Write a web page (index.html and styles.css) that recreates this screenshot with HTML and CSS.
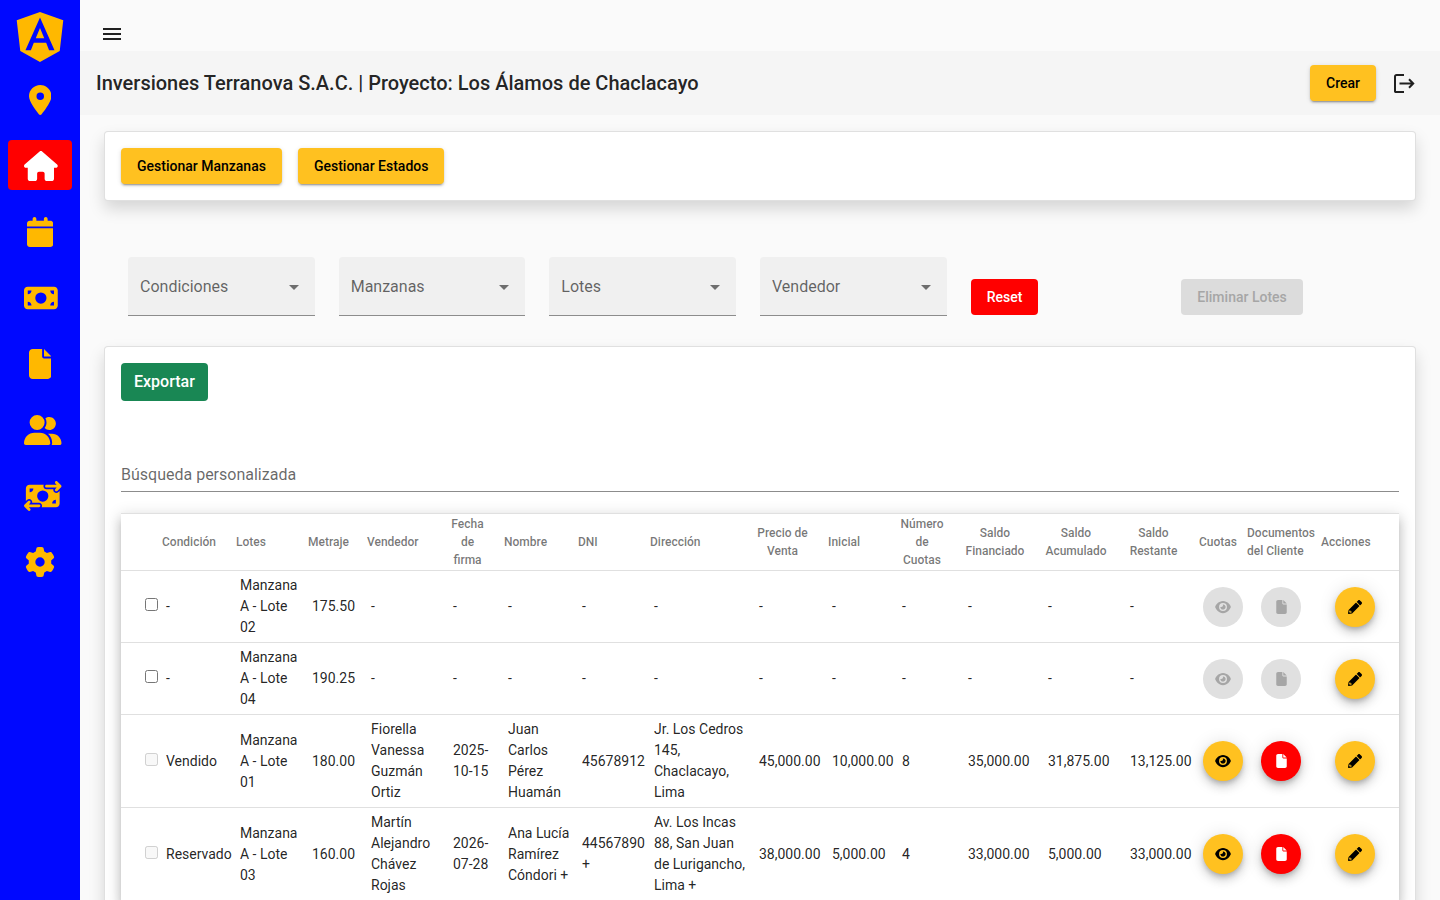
FILE: index.html
```
<!DOCTYPE html>
<html lang="es">
<head>
    <meta charset="UTF-8">
    <meta name="viewport" content="width=device-width, initial-scale=1.0">
    <title>Inversiones Terranova S.A.C.</title>
    <link rel="stylesheet" href="styles.css">
</head>
<body>
    <!-- iconos compartidos -->
    <svg class="sprite" aria-hidden="true">
        <symbol id="file" viewBox="0 0 384 512"><path d="M0 64C0 28.7 28.7 0 64 0H224V128c0 17.7 14.3 32 32 32H384V448c0 35.3-28.7 64-64 64H64c-35.3 0-64-28.7-64-64V64zm384 64H256V0L384 128z"/></symbol>
        <symbol id="eye" viewBox="0 0 576 512"><path d="M288 32c-80.8 0-145.5 36.8-192.6 80.6C48.6 156 17.3 208 2.5 243.7c-3.3 7.9-3.3 16.7 0 24.6C17.3 304 48.6 356 95.4 399.4C142.5 443.2 207.2 480 288 480s145.5-36.8 192.6-80.6c46.8-43.5 78.1-95.4 93-131.1c3.3-7.9 3.3-16.7 0-24.6c-14.9-35.7-46.2-87.7-93-131.1C433.5 68.8 368.8 32 288 32zM144 256a144 144 0 1 1 288 0 144 144 0 1 1 -288 0zm144-64c0 35.3-28.7 64-64 64c-7.1 0-13.9-1.2-20.3-3.3c-5.5-1.8-11.9 1.6-11.7 7.4c.3 6.9 1.3 13.8 3.2 20.7c13.7 51.2 66.4 81.6 117.6 67.9s81.6-66.4 67.9-117.6c-11.1-41.5-47.8-69.4-88.6-71.1c-5.8-.2-9.2 6.1-7.4 11.7c2.1 6.4 3.3 13.2 3.3 20.3z"/></symbol>
        <symbol id="pencil" viewBox="0 0 512 512"><path fill-rule="evenodd" d="M497.900 142.100l-46.100 46.100c-4.700 4.700-12.300 4.700-17 0l-111-111c-4.700-4.700-4.700-12.300 0-17l46.100-46.100c18.700-18.700 49.100-18.700 67.900 0l60.100 60.100c18.800 18.700 18.800 49.100 0 67.900zM284.200 99.800L21.600 362.400.4 483.900c-2.900 16.400 11.400 30.600 27.800 27.800l121.500-21.300 262.600-262.600c4.700-4.700 4.700-12.300 0-17l-111-111c-4.800-4.700-12.400-4.700-17.100 0zM88 424h44v34l-60 12-30-30L54 380H88v44z"/></symbol>
    </svg>

    <div class="app">
        <nav class="sidebar">
            <a class="logo" href="#inicio" aria-label="Inicio">
                <svg viewBox="31 30 188 200" width="48" height="50"><path fill-rule="evenodd" d="M125 30 31.900 63.200l14.200 123.100L125 230l78.900-43.700 14.200-123.100zM125 52.100l58 130.500h-21.700l-11.700-29.200h-49.400l-11.700 29.200H66.800zM142 135.400l-17-40.900-17 40.900z"/></svg>
            </a>
            <a class="item" href="#proyectos" aria-label="Proyectos">
                <svg viewBox="0 0 384 512"><path d="M215.700 499.200C267 435 384 279.400 384 192C384 86 298 0 192 0S0 86 0 192c0 87.400 117 243 168.300 307.200c12.300 15.300 35.100 15.300 47.400 0zM192 128a64 64 0 1 1 0 128 64 64 0 1 1 0-128z"/></svg>
            </a>
            <a class="item active" href="#lotes" aria-label="Lotes">
                <svg viewBox="0 0 576 512"><path d="M575.800 255.500c0 18-15 32.100-32 32.100h-32l.7 160.200c0 2.700-.2 5.400-.5 8.100V472c0 22.100-17.900 40-40 40H456c-1.100 0-2.200 0-3.300-.1c-1.400 .1-2.800 .1-4.200 .1H416 392c-22.100 0-40-17.900-40-40V448 384c0-17.700-14.300-32-32-32H256c-17.700 0-32 14.300-32 32v64 24c0 22.100-17.900 40-40 40H160 128.100c-1.500 0-3-.1-4.500-.2c-1.200 .1-2.400 .2-3.600 .2H104c-22.100 0-40-17.900-40-40V360c0-.9 0-1.900 .1-2.800V287.600H32c-18 0-32-14-32-32.100c0-9 3-17 10-24L266.400 8c7-7 15-8 22-8s15 2 21 7L564.800 231.500c8 7 12 15 11 24z"/></svg>
            </a>
            <a class="item" href="#calendario" aria-label="Calendario">
                <svg viewBox="0 0 448 512"><path d="M96 32V64H48C21.500 64 0 85.500 0 112v48H448V112c0-26.500-21.500-48-48-48H352V32c0-17.700-14.300-32-32-32s-32 14.300-32 32V64H160V32c0-17.700-14.300-32-32-32S96 14.300 96 32zM448 192H0V464c0 26.500 21.500 48 48 48H400c26.500 0 48-21.500 48-48V192z"/></svg>
            </a>
            <a class="item" href="#pagos" aria-label="Pagos">
                <svg viewBox="0 0 576 512"><path d="M64 64C28.700 64 0 92.700 0 128V384c0 35.300 28.700 64 64 64H512c35.300 0 64-28.700 64-64V128c0-35.300-28.700-64-64-64H64zm64 320H64V320c35.300 0 64 28.700 64 64zM64 192V128h64c0 35.300-28.700 64-64 64zM448 384c0-35.300 28.700-64 64-64v64H448zm64-192c-35.300 0-64-28.700-64-64h64v64zM288 160a96 96 0 1 1 0 192 96 96 0 1 1 0-192z"/></svg>
            </a>
            <a class="item" href="#documentos" aria-label="Documentos">
                <svg viewBox="0 0 384 512"><use href="#file"/></svg>
            </a>
            <a class="item" href="#clientes" aria-label="Clientes">
                <svg viewBox="0 0 640 512"><path d="M96 128a128 128 0 1 1 256 0A128 128 0 1 1 96 128zM0 482.300C0 383.800 79.800 304 178.300 304h91.400C368.200 304 448 383.800 448 482.300c0 16.400-13.300 29.700-29.700 29.700H29.700C13.300 512 0 498.700 0 482.300zM609.300 512H471.400c5.400-9.400 8.600-20.300 8.600-32v-8c0-60.700-27.100-115.200-69.800-151.800c2.400-.1 4.700-.2 7.100-.2h61.400C567.800 320 640 392.200 640 481.300c0 17-13.800 30.700-30.700 30.700zM432 256c-31 0-59-12.600-79.300-32.900C372.400 196.500 384 163.600 384 128c0-26.800-6.600-52.100-18.300-74.300C384.300 40.100 407.200 32 432 32c61.900 0 112 50.100 112 112s-50.100 112-112 112z"/></svg>
            </a>
            <a class="item" href="#transferencias" aria-label="Transferencias">
                <svg viewBox="0 0 640 512"><path d="M535 41c-9.400-9.400-9.400-24.600 0-33.900s24.600-9.400 33.900 0l64 64c4.500 4.500 7 10.600 7 17s-2.500 12.500-7 17l-64 64c-9.400 9.400-24.600 9.400-33.900 0s-9.400-24.600 0-33.900l23-23L384 112c-13.300 0-24-10.700-24-24s10.700-24 24-24l174.100 0L535 41zM105 377l-23 23L256 400c13.300 0 24 10.700 24 24s-10.700 24-24 24L81.900 448l23 23c9.400 9.400 9.400 24.600 0 33.900s-24.600 9.400-33.900 0L7 441c-4.500-4.500-7-10.600-7-17s2.500-12.500 7-17l64-64c9.400-9.400 24.600-9.400 33.900 0s9.400 24.600 0 33.900zM96 64H337.900c-3.700 7.200-5.900 15.300-5.900 24c0 28.700 23.300 52 52 52l117.400 0c-4 17 .6 35.500 13.800 48.800c20.300 20.300 53.200 20.300 73.500 0L608 169.500V384c0 35.300-28.700 64-64 64H302.100c3.700-7.200 5.900-15.300 5.900-24c0-28.700-23.300-52-52-52l-117.400 0c4-17-.6-35.500-13.800-48.800c-20.300-20.300-53.200-20.300-73.500 0L32 342.500V128c0-35.300 28.700-64 64-64zm64 64H96v64c35.300 0 64-28.700 64-64zM544 320c-35.300 0-64 28.700-64 64h64V320zM320 352a96 96 0 1 0 0-192 96 96 0 1 0 0 192z"/></svg>
            </a>
            <a class="item" href="#configuracion" aria-label="Configuración">
                <svg viewBox="0 0 512 512"><path d="M495.900 166.600c3.200 8.700 .5 18.400-6.400 24.600l-43.300 39.400c1.100 8.300 1.700 16.800 1.700 25.400s-.6 17.100-1.700 25.400l43.300 39.400c6.900 6.200 9.600 15.900 6.400 24.600c-4.400 11.900-9.700 23.300-15.800 34.300l-4.700 8.100c-6.600 11-14 21.400-22.100 31.200c-5.900 7.200-15.700 9.600-24.500 6.800l-55.700-17.700c-13.400 10.300-28.200 18.900-44 25.400l-12.500 57.100c-2 9.100-9 16.300-18.200 17.800c-13.800 2.300-28 3.500-42.500 3.500s-28.700-1.200-42.500-3.500c-9.200-1.500-16.200-8.700-18.200-17.800l-12.500-57.100c-15.800-6.500-30.600-15.100-44-25.400L83.100 425.900c-8.800 2.800-18.600 .3-24.500-6.800c-8.100-9.800-15.500-20.200-22.100-31.200l-4.700-8.100c-6.100-11-11.400-22.400-15.800-34.300c-3.200-8.700-.5-18.400 6.400-24.600l43.300-39.400C64.600 273.100 64 264.600 64 256s.6-17.100 1.700-25.400L22.400 191.200c-6.900-6.200-9.600-15.900-6.400-24.600c4.400-11.900 9.700-23.300 15.800-34.300l4.700-8.100c6.600-11 14-21.400 22.100-31.200c5.900-7.200 15.700-9.600 24.500-6.800l55.700 17.700c13.400-10.300 28.200-18.900 44-25.400l12.500-57.100c2-9.100 9-16.300 18.200-17.800C227.300 1.200 241.500 0 256 0s28.700 1.200 42.500 3.500c9.200 1.500 16.200 8.700 18.200 17.800l12.500 57.100c15.800 6.500 30.600 15.100 44 25.400l55.700-17.700c8.800-2.800 18.600-.3 24.500 6.800c8.100 9.800 15.500 20.200 22.100 31.200l4.700 8.100c6.100 11 11.400 22.400 15.800 34.300zM256 336a80 80 0 1 0 0-160 80 80 0 1 0 0 160z"/></svg>
            </a>
        </nav>

        <main class="main">
            <div class="topbar">
                <button class="icon-btn" aria-label="Menú">
                    <svg viewBox="0 0 24 24" width="24" height="24"><path d="M3 18h18v-2H3v2zm0-5h18v-2H3v2zm0-7v2h18V6H3z"/></svg>
                </button>
            </div>

            <header class="toolbar">
                <h1>Inversiones Terranova S.A.C. | Proyecto: Los Álamos de Chaclacayo</h1>
                <button class="btn btn-amber">Crear</button>
                <button class="icon-btn" aria-label="Cerrar sesión">
                    <svg class="line" viewBox="0 0 24 24" width="24" height="24"><path d="M12 4H4.500A1.500 1.500 0 0 0 3 5.500v15A1.500 1.500 0 0 0 4.500 21H12M7.500 12.500H21M17 8.300l4.200 4.200-4.200 4.200"/></svg>
                </button>
            </header>

            <div class="content">
                <section class="card actions">
                    <button class="btn btn-amber">Gestionar Manzanas</button>
                    <button class="btn btn-amber">Gestionar Estados</button>
                </section>

                <section class="filters">
                    <div class="field">
                        <select aria-label="Condiciones"><option>Condiciones</option></select>
                    </div>
                    <div class="field">
                        <select aria-label="Manzanas"><option>Manzanas</option></select>
                    </div>
                    <div class="field">
                        <select aria-label="Lotes"><option>Lotes</option></select>
                    </div>
                    <div class="field">
                        <select aria-label="Vendedor"><option>Vendedor</option></select>
                    </div>
                    <button class="btn btn-red">Reset</button>
                    <button class="btn btn-disabled" disabled>Eliminar Lotes</button>
                </section>

                <section class="card">
                    <button class="btn-export">Exportar</button>
                    <input class="search" type="text" placeholder="Búsqueda personalizada" aria-label="Búsqueda personalizada">

                    <table class="table">
                        <colgroup>
                            <col class="c-check"><col class="c-cond"><col class="c-lote"><col class="c-metraje">
                            <col class="c-vendedor"><col class="c-fecha"><col class="c-nombre"><col class="c-dni">
                            <col class="c-direccion"><col class="c-precio"><col class="c-inicial"><col class="c-numero">
                            <col class="c-financiado"><col class="c-acumulado"><col class="c-restante">
                            <col class="c-cuotas"><col class="c-docs"><col class="c-acciones">
                        </colgroup>
                        <thead>
                            <tr>
                                <th></th>
                                <th>Condición</th>
                                <th>Lotes</th>
                                <th>Metraje</th>
                                <th>Vendedor</th>
                                <th class="sort">Fecha de firma</th>
                                <th>Nombre</th>
                                <th>DNI</th>
                                <th>Dirección</th>
                                <th class="sort">Precio de Venta</th>
                                <th>Inicial</th>
                                <th class="sort">Número de Cuotas</th>
                                <th class="sort">Saldo Financiado</th>
                                <th class="sort">Saldo Acumulado</th>
                                <th class="sort">Saldo Restante</th>
                                <th>Cuotas</th>
                                <th>Documentos del Cliente</th>
                                <th>Acciones</th>
                            </tr>
                        </thead>
                        <tbody>
                            <tr>
                                <td class="check"><input type="checkbox" aria-label="Seleccionar lote 02"></td>
                                <td>-</td>
                                <td>Manzana A - Lote 02</td>
                                <td>175.50</td>
                                <td>-</td>
                                <td>-</td>
                                <td>-</td>
                                <td>-</td>
                                <td>-</td>
                                <td>-</td>
                                <td>-</td>
                                <td>-</td>
                                <td>-</td>
                                <td>-</td>
                                <td>-</td>
                                <td><button class="fab" disabled aria-label="Ver cuotas"><svg width="16" height="14"><use href="#eye"/></svg></button></td>
                                <td class="docs"><button class="fab" disabled aria-label="Ver documentos"><svg width="11" height="14"><use href="#file"/></svg></button></td>
                                <td class="edit"><button class="fab fab-amber" aria-label="Editar"><svg width="14" height="14"><use href="#pencil"/></svg></button></td>
                            </tr>
                            <tr>
                                <td class="check"><input type="checkbox" aria-label="Seleccionar lote 04"></td>
                                <td>-</td>
                                <td>Manzana A - Lote 04</td>
                                <td>190.25</td>
                                <td>-</td>
                                <td>-</td>
                                <td>-</td>
                                <td>-</td>
                                <td>-</td>
                                <td>-</td>
                                <td>-</td>
                                <td>-</td>
                                <td>-</td>
                                <td>-</td>
                                <td>-</td>
                                <td><button class="fab" disabled aria-label="Ver cuotas"><svg width="16" height="14"><use href="#eye"/></svg></button></td>
                                <td class="docs"><button class="fab" disabled aria-label="Ver documentos"><svg width="11" height="14"><use href="#file"/></svg></button></td>
                                <td class="edit"><button class="fab fab-amber" aria-label="Editar"><svg width="14" height="14"><use href="#pencil"/></svg></button></td>
                            </tr>
                            <tr>
                                <td class="check"><input type="checkbox" disabled aria-label="Seleccionar lote 01"></td>
                                <td>Vendido</td>
                                <td>Manzana A - Lote 01</td>
                                <td>180.00</td>
                                <td>Fiorella Vanessa Guzmán Ortiz</td>
                                <td>2025-10-15</td>
                                <td>Juan Carlos Pérez Huamán</td>
                                <td>45678912</td>
                                <td>Jr. Los Cedros 145, Chaclacayo, Lima</td>
                                <td>45,000.00</td>
                                <td>10,000.00</td>
                                <td>8</td>
                                <td>35,000.00</td>
                                <td>31,875.00</td>
                                <td>13,125.00</td>
                                <td><button class="fab fab-amber" aria-label="Ver cuotas"><svg width="16" height="14"><use href="#eye"/></svg></button></td>
                                <td class="docs"><button class="fab fab-red" aria-label="Ver documentos"><svg width="11" height="14"><use href="#file"/></svg></button></td>
                                <td class="edit"><button class="fab fab-amber" aria-label="Editar"><svg width="14" height="14"><use href="#pencil"/></svg></button></td>
                            </tr>
                            <tr>
                                <td class="check"><input type="checkbox" disabled aria-label="Seleccionar lote 03"></td>
                                <td>Reservado</td>
                                <td>Manzana A - Lote 03</td>
                                <td>160.00</td>
                                <td>Martín Alejandro Chávez Rojas</td>
                                <td>2026-07-28</td>
                                <td>Ana Lucía Ramírez Cóndori +</td>
                                <td>44567890 +</td>
                                <td>Av. Los Incas 88, San Juan de Lurigancho, Lima +</td>
                                <td>38,000.00</td>
                                <td>5,000.00</td>
                                <td>4</td>
                                <td>33,000.00</td>
                                <td>5,000.00</td>
                                <td>33,000.00</td>
                                <td><button class="fab fab-amber" aria-label="Ver cuotas"><svg width="16" height="14"><use href="#eye"/></svg></button></td>
                                <td class="docs"><button class="fab fab-red" aria-label="Ver documentos"><svg width="11" height="14"><use href="#file"/></svg></button></td>
                                <td class="edit"><button class="fab fab-amber" aria-label="Editar"><svg width="14" height="14"><use href="#pencil"/></svg></button></td>
                            </tr>
                        </tbody>
                    </table>
                </section>
            </div>
        </main>
    </div>
</body>
</html>
```
FILE: styles.css
```
* {
    box-sizing: border-box;
}
body {
    margin: 0;
    font-family: Roboto, "Liberation Sans", sans-serif;
    font-size: 14px;
    color: rgba(0, 0, 0, .87);
    background: #fafafa;
}
button, input, select {
    font-family: inherit;
}
button {
    cursor: pointer;
}
svg {
    fill: currentColor;
}
.sprite {
    display: none;
}
.app {
    display: flex;
    height: 100vh;
}

/* menu lateral */
.sidebar {
    flex: none;
    width: 80px;
    padding: 12px 8px;
    display: flex;
    flex-direction: column;
    gap: 16px;
    background: #0008ff;
    color: #ffb800;
}
.sidebar a {
    color: inherit;
}
.logo {
    display: flex;
    justify-content: center;
    margin-bottom: -4px;
}
.item {
    height: 50px;
    padding: 11px 16px 9px;
    border-radius: 4px;
    text-align: center;
    line-height: 30px;
}
.item svg {
    height: 30px;
    vertical-align: top;
}
.sidebar .item.active {
    background: #ff0000;
    color: #fff;
}

.main {
    flex: 1;
    min-width: 0;
    overflow-y: auto;
    scrollbar-width: none;
}
.topbar {
    padding: 22px 20px 5px;
}
.icon-btn {
    display: block;
    padding: 0;
    border: none;
    background: none;
    color: rgba(0, 0, 0, .87);
    line-height: 0;
}
.line {
    fill: none;
    stroke: currentColor;
    stroke-width: 2;
}
.toolbar {
    display: flex;
    align-items: center;
    gap: 16px;
    height: 64px;
    padding: 0 24px 0 16px;
    background: #f5f5f5;
}
.toolbar h1 {
    flex: 1;
    margin: 0;
    font-size: 20px;
    font-weight: 500;
}

/* botones */
.btn {
    height: 36px;
    padding: 0 16px;
    border: none;
    border-radius: 4px;
    font-size: 14px;
    font-weight: 500;
}
.btn-amber {
    background: #ffc120;
    color: #000;
    box-shadow: 0 3px 1px -2px rgba(0, 0, 0, .2), 0 2px 2px 0 rgba(0, 0, 0, .14), 0 1px 5px 0 rgba(0, 0, 0, .12);
}
.btn-red {
    background: #ff0000;
    color: #fff;
}
.btn-disabled {
    background: #dcdcdc;
    color: #a6a6a6;
    cursor: default;
}

.content {
    padding: 16px 24px;
}
.card {
    padding: 16px;
    border: 1px solid rgba(0, 0, 0, .12);
    border-radius: 4px;
    background: #fff;
    box-shadow: 0 8px 16px rgba(0, 0, 0, .15);
}
.actions {
    display: flex;
    gap: 16px;
}
.filters {
    display: grid;
    grid-template-columns: repeat(6, 1fr);
    gap: 24px;
    align-items: end;
    justify-items: start;
    padding: 56px 48px 30px 24px;
}
.filters .btn {
    margin-bottom: 1px;
}
.field {
    position: relative;
    width: 100%;
}
.field select {
    display: block;
    width: 100%;
    height: 59px;
    padding: 0 36px 0 12px;
    border: none;
    border-bottom: 1px solid #8c8c8c;
    border-radius: 4px 4px 0 0;
    background: #f0f0f0;
    color: rgba(0, 0, 0, .6);
    font-size: 16px;
    appearance: none;
}
.field::after {
    content: '';
    position: absolute;
    right: 16px;
    top: 28px;
    border: 5px solid transparent;
    border-top-color: rgba(0, 0, 0, .54);
    border-bottom: none;
    pointer-events: none;
}

.btn-export {
    display: block;
    height: 38px;
    padding: 0 13px 2px;
    border: none;
    border-radius: 4px;
    background: #198754;
    color: #fff;
    font-size: 16px;
    font-weight: 500;
}
.search {
    display: block;
    width: 100%;
    height: 35px;
    margin: 56px 0 21px;
    padding: 0;
    border: none;
    border-bottom: 1px solid #8c8c8c;
    outline: none;
    background: none;
    font-size: 16px;
}
.search::placeholder {
    color: rgba(0, 0, 0, .6);
}

/* tabla */
.table {
    width: 100%;
    table-layout: fixed;
    border-spacing: 0;
    border-top: 1px solid rgba(0, 0, 0, .12);
    background: #fff;
    box-shadow: 0 5px 5px -3px rgba(0, 0, 0, .2), 0 8px 10px 1px rgba(0, 0, 0, .14), 0 3px 14px 2px rgba(0, 0, 0, .12);
}
.c-check { width: 41px; }
.c-cond { width: 74px; }
.c-lote { width: 72px; }
.c-metraje { width: 59px; }
.c-vendedor { width: 82px; }
.c-fecha { width: 55px; }
.c-nombre { width: 74px; }
.c-dni { width: 72px; }
.c-direccion { width: 105px; }
.c-precio { width: 73px; }
.c-inicial { width: 70px; }
.c-numero { width: 66px; }
.c-financiado { width: 80px; }
.c-acumulado { width: 82px; }
.c-restante { width: 73px; }
.c-cuotas { width: 48px; }
.c-docs { width: 74px; }
.c-acciones { width: 78px; }
.table th {
    height: 57px;
    padding: 1px 0;
    border-bottom: 1px solid rgba(0, 0, 0, .12);
    color: rgba(0, 0, 0, .54);
    font-size: 12px;
    font-weight: 500;
    line-height: 18px;
    text-align: left;
}
.table th.sort {
    padding-right: 18px;
    text-align: center;
}
.table td {
    padding: 4px;
    border-bottom: 1px solid rgba(0, 0, 0, .12);
    line-height: 21px;
}
.table td.check {
    padding-left: 24px;
    padding-right: 0;
}
.check input {
    display: block;
    margin: 0 0 4px;
}
.table td.docs {
    padding-right: 6px;
    padding-left: 0;
    text-align: center;
}
.table td.edit {
    padding-right: 24px;
    text-align: right;
}
.fab {
    display: inline-flex;
    align-items: center;
    justify-content: center;
    width: 40px;
    height: 40px;
    padding: 0;
    border: none;
    border-radius: 50%;
    background: #e0e0e0;
    color: #a6a6a6;
    vertical-align: middle;
}
.fab-amber, .fab-red {
    box-shadow: 0 3px 5px -1px rgba(0, 0, 0, .2), 0 6px 10px 0 rgba(0, 0, 0, .14), 0 1px 18px 0 rgba(0, 0, 0, .12);
}
.fab-amber {
    background: #ffc120;
    color: #000;
}
.fab-red {
    background: #ff0000;
    color: #fff;
}
```
